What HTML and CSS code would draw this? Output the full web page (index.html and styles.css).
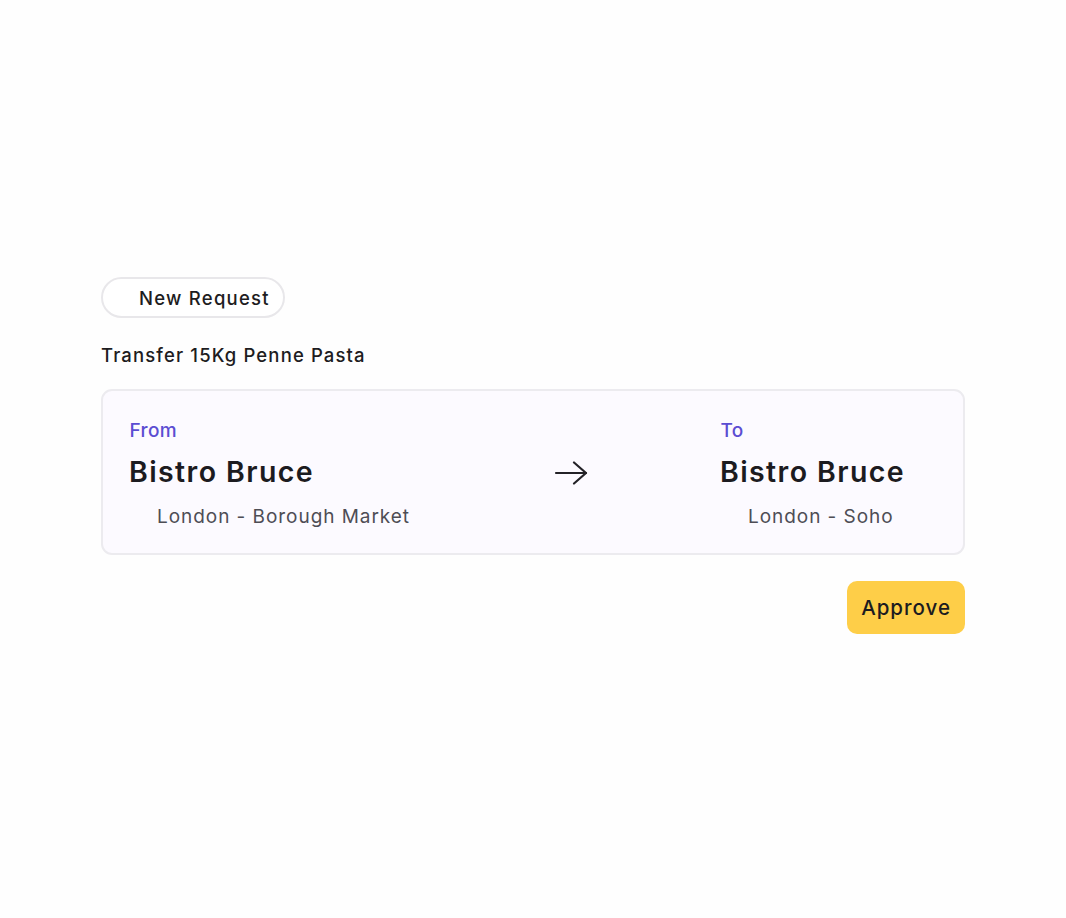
FILE: index.html
```html
<!DOCTYPE html>
<html lang="en">
<head>
<meta charset="utf-8">
<title>Transfer Request</title>
<link rel="stylesheet" href="styles.css">
</head>
<body>
<main class="request">
  <div class="pill"><span class="pill-text">New Request</span></div>
  <p class="title">Transfer 15Kg Penne Pasta</p>
  <section class="card">
    <div class="place place-from">
      <div class="label">From</div>
      <div class="name">Bistro Bruce</div>
      <div class="loc">London - Borough Market</div>
    </div>
    <svg class="arrow" width="34" height="24" viewBox="0 0 34 24" fill="none" stroke="#232227" stroke-width="2.2" stroke-linecap="round" stroke-linejoin="round">
      <path d="M2 12 H32"/>
      <path d="M20 1.5 L32 12 L20 22.5"/>
    </svg>
    <div class="place place-to">
      <div class="label">To</div>
      <div class="name">Bistro Bruce</div>
      <div class="loc">London - Soho</div>
    </div>
  </section>
  <div class="actions">
    <button class="approve">Approve</button>
  </div>
</main>
</body>
</html>
```

FILE: styles.css
```css
html, body {
  margin: 0;
  padding: 0;
  background: #fefefe;
}
body {
  font-family: Inter, "Noto Sans", sans-serif;
  color: #1c1b20;
}
.request {
  width: 864px;
  margin-left: 101px;
  padding-top: 277px;
}
.pill {
  display: inline-flex;
  align-items: center;
  height: 37px;
  padding: 0 13px 0 36px;
  border: 2px solid #e8e7ea;
  border-radius: 22px;
  background: #fff;
}
.pill-text {
  font-size: 18.5px;
  font-weight: 500;
  letter-spacing: 1.25px;
  color: #1d1c21;
}
.title {
  margin: 24px 0 0;
  font-size: 18.5px;
  font-weight: 500;
  letter-spacing: 1.13px;
  line-height: 26px;
  color: #1d1c21;
}
.card {
  display: flex;
  align-items: flex-start;
  margin-top: 21px;
  box-sizing: border-box;
  height: 166px;
  padding: 27.5px 28px 0;
  border: 2.5px solid #ecebef;
  border-radius: 11px;
  background: #fcfaff;
}
.place-from {
  flex: 1;
}
.place-to {
  width: 213px;
  margin-left: 134px;
}
.label {
  margin-left: -1.5px;
  font-size: 19px;
  font-weight: 500;
  letter-spacing: 0.4px;
  line-height: 24px;
  color: #5b4dd2;
}
.name {
  margin-top: 11px;
  margin-left: -2px;
  font-size: 28.5px;
  font-weight: 600;
  line-height: 36px;
  letter-spacing: 1.4px;
  color: #1c1b20;
}
.loc {
  margin-top: 15px;
  padding-left: 26px;
  font-size: 19px;
  font-weight: 400;
  letter-spacing: 0.95px;
  line-height: 24px;
  color: #4e4d55;
}
.arrow {
  display: block;
  flex: none;
  align-self: center;
  margin-top: -25px;
}
.actions {
  display: flex;
  justify-content: flex-end;
  margin-top: 26px;
}
.approve {
  height: 53px;
  padding: 0 14px;
  border: none;
  border-radius: 10px;
  background: #fece48;
  font-family: Inter, "Noto Sans", sans-serif;
  font-size: 20.5px;
  font-weight: 500;
  letter-spacing: 1px;
  color: #1c1b20;
}
```
